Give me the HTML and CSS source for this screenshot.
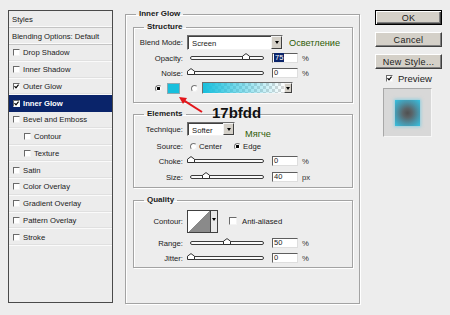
FILE: index.html
```html
<!DOCTYPE html>
<html>
<head>
<meta charset="utf-8">
<link rel="stylesheet" href="styles.css">
</head>
<body>
<div class="dialog">
  <div class="styles-panel">
    <div class="row head">Styles</div>
    <div class="row head">Blending Options: Default</div>
    <div class="row"><span class="cb"></span>Drop Shadow</div>
    <div class="row"><span class="cb"></span>Inner Shadow</div>
    <div class="row"><span class="cb"><svg viewBox="0 0 5 5"><path d="M0.5 2.2 L2 3.9 L4.6 0.6"/></svg></span>Outer Glow</div>
    <div class="row active"><span class="cb"><svg viewBox="0 0 5 5"><path d="M0.5 2.2 L2 3.9 L4.6 0.6"/></svg></span>Inner Glow</div>
    <div class="row"><span class="cb"></span>Bevel and Emboss</div>
    <div class="row sub"><span class="cb"></span>Contour</div>
    <div class="row sub"><span class="cb"></span>Texture</div>
    <div class="row"><span class="cb"></span>Satin</div>
    <div class="row"><span class="cb"></span>Color Overlay</div>
    <div class="row"><span class="cb"></span>Gradient Overlay</div>
    <div class="row"><span class="cb"></span>Pattern Overlay</div>
    <div class="row"><span class="cb"></span>Stroke</div>
  </div>

  <fieldset class="group outer">
    <legend>Inner Glow</legend>

    <fieldset class="group inner structure">
      <legend>Structure</legend>
      <div class="field h15">
        <span class="lbl">Blend Mode:</span>
        <div class="select wide"><span class="val">Screen</span><span class="drop"><i></i></span></div>
        <span class="note">Осветление</span>
      </div>
      <div class="field h16">
        <span class="lbl">Opacity:</span>
        <div class="slider"><svg class="thumb" style="left:calc(76% - 4px)" viewBox="0 0 8 7"><path d="M0.5 6.5 V3.2 L4 0.6 L7.5 3.2 V6.5 Z"/></svg></div>
        <span class="num"><span class="sel">75</span></span>
        <span class="unit">%</span>
      </div>
      <div class="field h14">
        <span class="lbl">Noise:</span>
        <div class="slider"><svg class="thumb" style="left:calc(0% - 4px)" viewBox="0 0 8 7"><path d="M0.5 6.5 V3.2 L4 0.6 L7.5 3.2 V6.5 Z"/></svg></div>
        <span class="num">0</span>
        <span class="unit">%</span>
      </div>
      <div class="field h16 colorrow">
        <span class="radio on"></span>
        <span class="swatch"></span>
        <span class="radio r2"></span>
        <div class="gradient"><span class="gfill"></span><span class="drop"><i></i></span></div>
      </div>
    </fieldset>

    <fieldset class="group inner elements">
      <legend>Elements</legend>
      <div class="field h14">
        <span class="lbl">Technique:</span>
        <div class="select narrow"><span class="val">Softer</span><span class="drop"><i></i></span></div>
        <span class="note n2">Мягче</span>
      </div>
      <div class="field h16 mt2">
        <span class="lbl">Source:</span>
        <span class="radio src1"></span><span class="rtext">Center</span>
        <span class="radio on src2"></span><span class="rtext">Edge</span>
      </div>
      <div class="field h14">
        <span class="lbl">Choke:</span>
        <div class="slider"><svg class="thumb" style="left:calc(0% - 4px)" viewBox="0 0 8 7"><path d="M0.5 6.5 V3.2 L4 0.6 L7.5 3.2 V6.5 Z"/></svg></div>
        <span class="num">0</span>
        <span class="unit">%</span>
      </div>
      <div class="field h16 mt1">
        <span class="lbl">Size:</span>
        <div class="slider"><svg class="thumb" style="left:calc(21% - 4px)" viewBox="0 0 8 7"><path d="M0.5 6.5 V3.2 L4 0.6 L7.5 3.2 V6.5 Z"/></svg></div>
        <span class="num">40</span>
        <span class="unit">px</span>
      </div>
    </fieldset>

    <fieldset class="group inner quality">
      <legend>Quality</legend>
      <div class="field h24">
        <span class="lbl">Contour:</span>
        <div class="contour"><span class="curve"></span><span class="cdrop"><i></i></span></div>
        <span class="cb aa"></span><span class="rtext">Anti-aliased</span>
      </div>
      <div class="field h14 mt3">
        <span class="lbl">Range:</span>
        <div class="slider"><svg class="thumb" style="left:calc(50% - 4px)" viewBox="0 0 8 7"><path d="M0.5 6.5 V3.2 L4 0.6 L7.5 3.2 V6.5 Z"/></svg></div>
        <span class="num">50</span>
        <span class="unit">%</span>
      </div>
      <div class="field h14 mt1">
        <span class="lbl">Jitter:</span>
        <div class="slider"><svg class="thumb" style="left:calc(0% - 4px)" viewBox="0 0 8 7"><path d="M0.5 6.5 V3.2 L4 0.6 L7.5 3.2 V6.5 Z"/></svg></div>
        <span class="num">0</span>
        <span class="unit">%</span>
      </div>
    </fieldset>
  </fieldset>

  <div class="side">
    <div class="btn default">OK</div>
    <div class="btn">Cancel</div>
    <div class="btn">New Style...</div>
    <div class="preview-check"><span class="cb"><svg viewBox="0 0 5 5"><path d="M0.5 2.2 L2 3.9 L4.6 0.6"/></svg></span><span>Preview</span></div>
    <div class="preview"><span class="sample"></span></div>
  </div>

  <svg class="arrow" viewBox="0 0 30 22" width="30" height="22">
    <line x1="27" y1="18" x2="8" y2="5.8" stroke="#e3161b" stroke-width="2"/>
    <path d="M4 3 L12 4 L8 10 Z" fill="#e3161b"/>
  </svg>
  <div class="hex">17bfdd</div>
</div>
</body>
</html>
```

FILE: styles.css
```css
* { box-sizing: border-box; }
html, body {
  margin: 0;
  padding: 0;
  width: 450px;
  height: 315px;
  overflow: hidden;
  background: #ededed;
}
body {
  font-family: "Liberation Sans", Arial, sans-serif;
  font-size: 7.7px;
  color: #1a1a1a;
}
.dialog {
  position: relative;
  display: flex;
  align-items: flex-start;
  padding: 9px 0 0 8px;
  height: 315px;
}

/* left styles list */
.styles-panel {
  width: 105px;
  height: 293px;
  margin-top: 1px;
  border: 1px solid #4a4a4a;
  background: #ececec;
  display: flex;
  flex-direction: column;
}
.row {
  height: 16.75px;
  display: flex;
  align-items: center;
  padding-left: 4px;
  border-bottom: 1px solid #fafafa;
  box-shadow: inset 0 -1px 0 #e0e0e0;
  white-space: nowrap;
}
.row.head {
  height: 17px;
  padding-left: 3px;
  border-bottom: 1px solid #c4c4c4;
  box-shadow: inset 0 -1px 0 #fafafa;
}
.row.sub { padding-left: 15px; }
.row.active {
  background: #0a246a;
  color: #fff;
  font-weight: bold;
  box-shadow: none;
  border-bottom-color: #0a246a;
}
.cb {
  width: 7px;
  height: 7px;
  flex: none;
  border: 1px solid;
  border-color: #6a6a6a #f4f4f4 #f4f4f4 #6a6a6a;
  background: #fff;
  margin-right: 3px;
  display: flex;
}
.cb svg { width: 5px; height: 5px; }
.cb svg path { fill: none; stroke: #000; stroke-width: 1.2; }

/* group boxes */
.group {
  margin: 0;
  min-width: 0;
  border: 1px solid #a3a3a3;
  box-shadow: inset 1px 1px 0 #fff, 1px 1px 0 #fff;
}
.group legend {
  padding: 0 3px;
  font-weight: bold;
  line-height: 10px;
  font-size: 8px;
}
.outer {
  margin-left: 12px;
  width: 235px;
  height: 295px;
  padding: 3px 6px 0 7px;
}
.outer > legend { margin-left: 3px; }
.inner { padding: 3px 0 0 0; }
.inner > legend { margin-left: 10px; }
.structure { padding-bottom: 6px; }
.elements { margin-top: 6px; padding-bottom: 2px; }
.quality { margin-top: 7px; padding-top: 4px; padding-bottom: 2px; }

.field { display: flex; align-items: center; white-space: nowrap; }
.h14 { height: 14px; }
.h15 { height: 15px; }
.h16 { height: 16px; }
.h24 { height: 24px; }
.mt1 { margin-top: 1px; }
.mt2 { margin-top: 2px; }
.mt3 { margin-top: 3px; }
.lbl {
  width: 49px;
  text-align: right;
  margin-right: 4px;
  flex: none;
}

.select {
  height: 15px;
  display: flex;
  align-items: stretch;
  background: #fff;
  border: 1px solid;
  border-color: #6e6e6e #f2f2f2 #f2f2f2 #6e6e6e;
  box-shadow: inset 1px 1px 0 #404040;
}
.select.wide { width: 96px; }
.select.narrow { width: 48px; height: 14px; }
.select .val { flex: 1; padding: 3px 0 0 4px; }
.drop {
  width: 11px;
  background: #d4d0c8;
  border: 1px solid;
  border-color: #f4f4f4 #404040 #404040 #f4f4f4;
  display: flex;
  align-items: center;
  justify-content: center;
}
.drop i {
  width: 0;
  height: 0;
  border-left: 2.5px solid transparent;
  border-right: 2.5px solid transparent;
  border-top: 3px solid #000;
}
.note {
  margin-left: 6px;
  color: #2e5c06;
  font-size: 9.2px;
}
.note.n2 { margin-left: 10px; align-self: flex-start; margin-top: 7px; line-height: 11px; }

.slider {
  position: relative;
  width: 74px;
  height: 4px;
  margin-left: 3px;
  border: 1px solid #3c3c3c;
  border-radius: 2px;
  background: #fafafa;
}
.thumb {
  position: absolute;
  top: -4px;
  width: 8px;
  height: 7px;
}
.thumb path { fill: #fff; stroke: #303030; stroke-width: 1; }
.num {
  width: 26px;
  height: 10px;
  margin-left: 8px;
  background: #fff;
  border: 1px solid;
  border-color: #5e5e5e #dedede #dedede #5e5e5e;
  font-size: 7.5px;
  line-height: 8px;
  padding-left: 1px;
}
.sel { background: #0a246a; color: #fff; padding: 0 1px; }
.unit { margin-left: 4px; color: #333; }

.radio {
  width: 7px;
  height: 7px;
  border-radius: 50%;
  flex: none;
  border: 1px solid;
  border-color: #777 #f2f2f2 #f2f2f2 #777;
  background: #fff;
}
.radio.on { background: radial-gradient(circle, #000 0 1.4px, #fff 1.8px); }
.colorrow .radio.on { margin-left: 21px; }
.swatch {
  width: 13px;
  height: 11px;
  margin-left: 5px;
  background: #17bfdd;
  border: 1px solid #8fa9b0;
}
.radio.r2 { margin-left: 11px; }
.gradient {
  width: 91px;
  height: 12px;
  margin-left: 4px;
  display: flex;
  border: 1px solid;
  border-color: #6e6e6e #f2f2f2 #f2f2f2 #6e6e6e;
}
.gfill {
  flex: 1;
  background:
    linear-gradient(to right, #17bfdd, rgba(23,191,221,0.25) 75%, rgba(23,191,221,0)),
    repeating-conic-gradient(#d8d8d8 0 25%, #fff 0 50%) 0 0 / 6px 6px;
}
.gradient .drop { width: 8px; }

.src1 { margin-left: 3px; }
.src2 { margin-left: 12px; }
.rtext { margin-left: 2px; }

.contour {
  display: flex;
  width: 31px;
  height: 23px;
  margin-left: 0;
  border: 1px solid #404040;
}
.curve {
  flex: 1;
  background: linear-gradient(to bottom right, #fff 50%, #8a8a8a 50%);
  border-right: 1px solid #404040;
}
.cdrop {
  width: 6px;
  background: #e8e8e8;
  display: flex;
  justify-content: center;
  padding-top: 7px;
}
.cdrop i {
  width: 0;
  height: 0;
  border-left: 2px solid transparent;
  border-right: 2px solid transparent;
  border-top: 3px solid #000;
}
.cb.aa { margin-left: 11px; width: 8px; height: 8px; }

/* right column */
.side {
  margin-left: 15px;
  width: 67px;
  margin-top: 1px;
  display: flex;
  flex-direction: column;
}
.btn {
  height: 15px;
  margin-bottom: 7px;
  background: #d4d0c8;
  border: 1px solid;
  border-color: #fff #404040 #404040 #fff;
  box-shadow: inset -1px -1px 0 #808080;
  display: flex;
  align-items: center;
  justify-content: center;
  font-size: 9px;
  letter-spacing: 0.3px;
  color: #222;
}
.btn.default {
  border: 1px solid #000;
  box-shadow: inset 1px 1px 0 #fff, inset -1px -1px 0 #404040, inset -2px -2px 0 #808080;
}
.preview-check {
  display: flex;
  align-items: center;
  height: 8px;
  margin-top: -2px;
  padding-left: 11px;
  font-size: 9.5px;
  color: #222;
}
.preview-check .cb { margin-right: 5px; }
.preview {
  width: 49px;
  height: 49px;
  margin: 6px 0 0 8px;
  background: #d8d8d8;
  border: 1px solid;
  border-color: #a8a8a8 #f6f6f6 #f6f6f6 #a8a8a8;
  display: flex;
  align-items: center;
  justify-content: center;
}
.sample {
  width: 25px;
  height: 26px;
  background: radial-gradient(circle, #505050 0, #5a6468 25%, #4a93a8 60%, #34c2e2 100%);
  box-shadow: 0 0 3px 1px rgba(90, 200, 230, 0.55);
}

/* annotation overlay */
.arrow {
  position: absolute;
  left: 175px;
  top: 94px;
}
.hex {
  position: absolute;
  left: 212px;
  top: 105px;
  font-size: 15px;
  line-height: 15px;
  font-weight: bold;
  color: #111;
}
```
